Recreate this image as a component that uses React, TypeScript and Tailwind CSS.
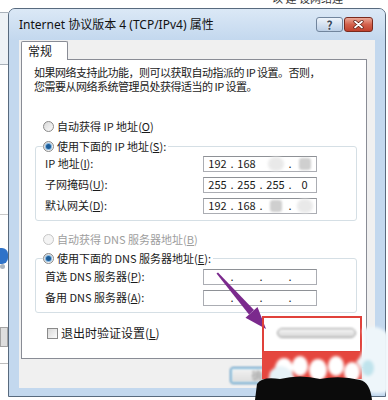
import React from "react";

const FONT = "font-['Noto_Sans_CJK_SC','Noto_Sans',sans-serif]";

function K({ k }: { k: string }) {
  return (
    <>
      (<span className="underline underline-offset-1">{k}</span>)
    </>
  );
}

function Radio({ checked, disabled }: { checked?: boolean; disabled?: boolean }) {
  return (
    <span
      className={`flex items-center justify-center w-[11px] h-[11px] rounded-full border shrink-0 ${
        disabled
          ? "border-[#c6c6c6] bg-[#f4f4f4]"
          : "border-[#8a8a8a] bg-linear-to-br from-[#d8d8d8] to-[#fbfbfb]"
      }`}
    >
      {checked && <span className="w-[5px] h-[5px] rounded-full bg-[#1d5d99] shadow-[0_0_0_1px_#86b8e2]" />}
    </span>
  );
}

const GreySq = () => <span className="block mx-auto w-[12px] h-[12px] rounded-[3px] bg-[#cfcfcf] blur-[1px]" />;
const WhiteBlob = () => <span className="block mx-auto w-[16px] h-[14px] rounded-full bg-[#e9e9e9] blur-[1.5px]" />;

function IpBox({ parts, hideDots = [] }: { parts: React.ReactNode[]; hideDots?: number[] }) {
  return (
    <div className="flex items-center w-[114px] h-[16px] border border-[#abadb3] border-t-[#8e9196] bg-white pl-[2px] text-[11px] leading-none">
      {parts.map((p, i) => (
        <React.Fragment key={i}>
          {i > 0 && <span className={`w-[6px] text-center ${hideDots.includes(i) ? "opacity-0" : ""}`}>.</span>}
          <span className="w-[23px] text-center">{p}</span>
        </React.Fragment>
      ))}
    </div>
  );
}

function Row({ label, parts, hideDots }: { label: React.ReactNode; parts: React.ReactNode[]; hideDots?: number[] }) {
  return (
    <div className="flex items-center h-[21px] pl-[2px]">
      <span className="flex-1">{label}</span>
      <IpBox parts={parts} hideDots={hideDots} />
    </div>
  );
}

const emptyIp = ["", "", "", ""];

export default function App() {
  return (
    <div className={`relative w-[388px] h-[400px] overflow-hidden bg-white flex ${FONT} text-[#1a1a1a]`}>
      {/* background window edge */}
      <div className="w-[8px] flex flex-col shrink-0">
        <div className="h-[12px]" />
        <div className="h-[53px] bg-[#eef2f6] border-y border-[#a9b1ba]" />
        <div className="h-[150px] border-b border-[#c9c9c9]" />
        <div className="h-[33px]" />
        <div className="h-[16px] bg-[#2f73c9] rounded-r-[6px]" />
        <div className="h-[5px] w-[5px] bg-[#a9b4c0] rounded-full" />
        <div className="h-[58px]" />
        <div className="h-[20px] bg-[#dedede] border border-[#a3a3a3]" />
        <div className="h-[17px] border-b border-[#bdbdbd]" />
      </div>

      <div className="flex flex-col">
        <div className="h-[8px] overflow-hidden pl-[264px] text-[11px] leading-[11px] text-[#333]">
          <div className="-mt-[7px] whitespace-nowrap">以 建 设网络连</div>
        </div>

        {/* window */}
        <div className="w-[378px] h-[389px] border border-[#586a7e] rounded-t-[7px] bg-[#c3d8ee] flex flex-col">
          <div className="h-[31px] flex items-center pl-[10px] pr-[12px] rounded-t-[6px] bg-linear-to-b from-[#dbe8f6] to-[#c3d8ee]">
            <span className="flex-1 text-[12px] font-['Noto_Sans','Noto_Sans_CJK_SC',sans-serif] text-[#111]">
              Internet 协议版本 4 (TCP/IPv4) 属性
            </span>
            <div className="flex gap-[1px]">
              <div className="w-[27px] h-[15px] rounded-[3px] border border-[#71859d] bg-linear-to-b from-[#eef4fb] to-[#bccfe6] flex items-center justify-center text-[12px] font-bold leading-none text-[#3c4a5b] [text-shadow:0_0_2px_#fff]">
                ?
              </div>
              <div className="w-[29px] h-[15px] rounded-[3px] border border-[#7a2a1e] bg-linear-to-b from-[#eaa897] via-[#d3614c] to-[#c0412d] flex items-center justify-center">
                <svg width="11" height="9" viewBox="0 0 11 9">
                  <path d="M2 1.5 L9 7.5 M9 1.5 L2 7.5" stroke="#5a1a10" strokeWidth="3.2" strokeLinecap="round" />
                  <path d="M2 1.5 L9 7.5 M9 1.5 L2 7.5" stroke="#ffffff" strokeWidth="1.8" strokeLinecap="round" />
                </svg>
              </div>
            </div>
          </div>

          {/* dialog body */}
          <div className="mx-[10px] h-[348px] bg-[#f0f0f0] pl-[2px] pr-[8px] pt-[1px] flex flex-col text-[11px]">
            <div className="relative z-10 w-[47px] h-[19px] -mb-[1px] bg-white border border-b-0 border-[#898c95] rounded-t-[2px] pl-[6px] text-[12px] leading-[18px]">
              常规
            </div>
            <div className="h-[300px] bg-white border border-[#898c95] pl-[13px] pr-[9px] pt-[5px] flex flex-col">
              <p className="-ml-[1px] leading-[14px] whitespace-nowrap tracking-[-0.5px]">
                如果网络支持此功能，则可以获取自动指派的 IP 设置。否则，
                <br />
                您需要从网络系统管理员处获得适当的 IP 设置。
              </p>

              <div className="mt-[26px] h-[14px] pl-[8px] flex items-center gap-[3px]">
                <Radio />
                <span>
                  自动获得 IP 地址<K k="O" />
                </span>
              </div>

              <fieldset className="mt-[6px] border border-[#d5dfe5] rounded-[3px] pl-[7px] pr-[39px] pb-[4px]">
                <legend className="flex items-center gap-[3px] pr-[2px] h-[14px]">
                  <Radio checked />
                  <span>
                    使用下面的 IP 地址<K k="S" />:
                  </span>
                </legend>
                <Row
                  label={<>IP 地址<K k="I" />:</>}
                  parts={["192", "168", <WhiteBlob key="a" />, <GreySq key="b" />]}
                  hideDots={[2]}
                />
                <Row label={<>子网掩码<K k="U" />:</>} parts={["255", "255", "255", "0"]} />
                <Row
                  label={<>默认网关<K k="D" />:</>}
                  parts={["192", "168", <GreySq key="c" />, <WhiteBlob key="d" />]}
                />
              </fieldset>

              <div className="mt-[11px] h-[14px] pl-[8px] flex items-center gap-[3px] text-[#9d9d9d]">
                <Radio disabled />
                <span>
                  自动获得 DNS 服务器地址<K k="B" />
                </span>
              </div>

              <fieldset className="mt-[5px] border border-[#d5dfe5] rounded-[3px] pl-[7px] pr-[39px] pt-[1px] pb-[4px]">
                <legend className="flex items-center gap-[3px] pr-[2px] h-[14px]">
                  <Radio checked />
                  <span>
                    使用下面的 DNS 服务器地址<K k="E" />:
                  </span>
                </legend>
                <Row label={<>首选 DNS 服务器<K k="P" />:</>} parts={emptyIp} />
                <Row label={<>备用 DNS 服务器<K k="A" />:</>} parts={emptyIp} />
              </fieldset>

              <div className="mt-[13px] h-[14px] flex items-center justify-between">
                <div className="pl-[12px] flex items-center gap-[3px]">
                  <span className="w-[11px] h-[11px] border border-[#8a8a8a] bg-linear-to-br from-[#d9d9d9] to-[#fcfcfc]" />
                  <span className="text-[12px]">
                    退出时验证设置<K k="L" />
                  </span>
                </div>
                <div className="mr-[1px] w-[79px] h-[10px] rounded-full border border-[#9a9a9a] bg-linear-to-b from-[#f6f6f6] to-[#d6d6d6] blur-[1px]" />
              </div>
            </div>

            <div className="mt-[8px] flex justify-end gap-[7px]">
              <div className="w-[65px] h-[17px] rounded-[3px] border border-[#3c7fb1] bg-linear-to-b from-[#f3f3f3] to-[#dcdcdc] shadow-[inset_0_0_0_1px_#aee0f7] flex items-center justify-center text-[11px] text-[#9a9a9a] blur-[1px]">
                确定
              </div>
              <div className="w-[65px] h-[17px] rounded-[3px] border border-[#707070] bg-linear-to-b from-[#f3f3f3] to-[#dcdcdc] flex items-center justify-center text-[11px]">
                取消
              </div>
            </div>
          </div>
        </div>
      </div>

      {/* annotation overlay: arrow, red box and smudge */}
      <svg className="absolute inset-0 pointer-events-none" width="388" height="400" viewBox="0 0 388 400">
        <defs>
          <filter id="soft" x="-20%" y="-20%" width="140%" height="140%">
            <feGaussianBlur stdDeviation="1.6" />
          </filter>
        </defs>
        <polygon points="216.5,273.5 218,272.5 254,310 249,314.5" fill="#7b2a8d" />
        <polygon points="266,329 245.5,317.7 257.5,307.1" fill="#7b2a8d" />
        <rect x="263" y="317" width="98" height="35" fill="none" stroke="#e0413a" strokeWidth="2" />
        <rect x="262" y="352" width="100" height="27" fill="#e5463e" />
        <g filter="url(#soft)" fill="#ffffff">
          <ellipse cx="284" cy="369" rx="9" ry="11" />
          <ellipse cx="300" cy="366" rx="8" ry="10" />
          <ellipse cx="318" cy="370" rx="9" ry="11" />
          <ellipse cx="336" cy="366" rx="8" ry="10" />
          <ellipse cx="352" cy="372" rx="8" ry="10" />
          <path d="M270 372 Q280 360 292 372 L300 392 L266 392 Z" fill="#e6f2f7" />
          <path d="M362 330 Q376 322 388 334 L388 392 Q372 396 360 388 Q366 372 356 362 Q368 350 362 330 Z" fill="#eef6fa" />
          <ellipse cx="368" cy="368" rx="6" ry="8" fill="#bfe3ec" />
        </g>
        <path d="M255 400 L257 384 Q262 376 280 379 Q300 374 320 379 Q340 375 360 380 Q370 382 372 400 Z" fill="#0b0b0b" />
      </svg>
    </div>
  );
}
